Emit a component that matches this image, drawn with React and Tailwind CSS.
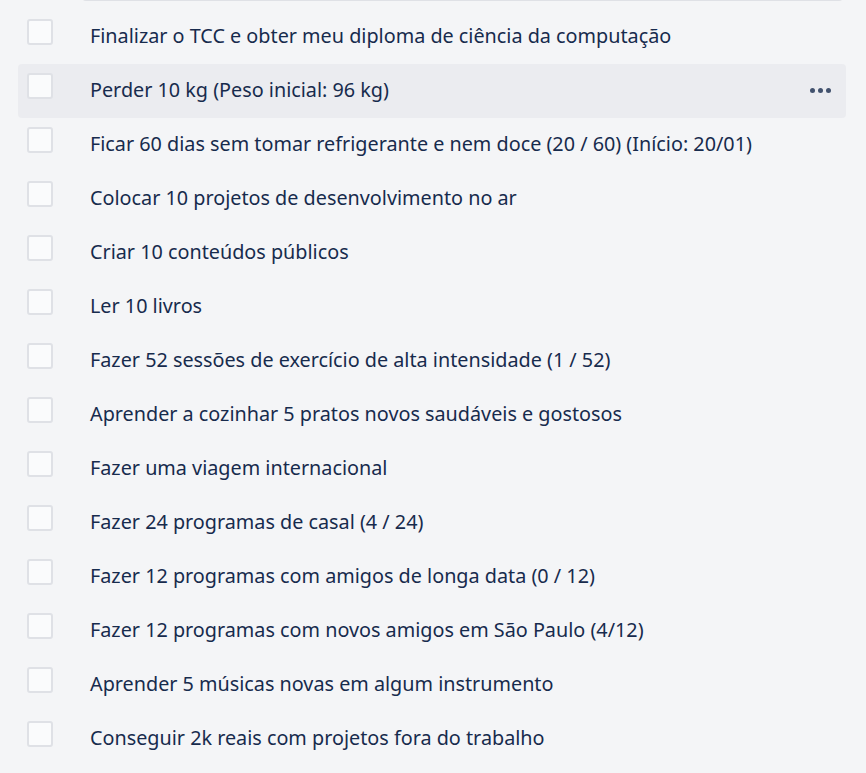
const ITEMS = [
  "Finalizar o TCC e obter meu diploma de ciência da computação",
  "Perder 10 kg (Peso inicial: 96 kg)",
  "Ficar 60 dias sem tomar refrigerante e nem doce (20 / 60) (Início: 20/01)",
  "Colocar 10 projetos de desenvolvimento no ar",
  "Criar 10 conteúdos públicos",
  "Ler 10 livros",
  "Fazer 52 sessões de exercício de alta intensidade (1 / 52)",
  "Aprender a cozinhar 5 pratos novos saudáveis e gostosos",
  "Fazer uma viagem internacional",
  "Fazer 24 programas de casal (4 / 24)",
  "Fazer 12 programas com amigos de longa data (0 / 12)",
  "Fazer 12 programas com novos amigos em São Paulo (4/12)",
  "Aprender 5 músicas novas em algum instrumento",
  "Conseguir 2k reais com projetos fora do trabalho",
];

function ChecklistItem({ text, active }) {
  return (
    <div
      className={
        "flex h-[54px] items-start rounded-[4px] pl-[9px] pr-[15px] " +
        (active ? "bg-[#ebecf0]" : "")
      }
    >
      <div className="mt-[9px] h-[26px] w-[26px] shrink-0 rounded-[3px] border-2 border-[#dfe1e6] bg-[#fafbfc]" />
      <div className="ml-[37px] flex h-full flex-1 items-center pb-[3px] text-[19.8px] text-[#172b4d]">
        {text}
      </div>
      {active ? (
        <div className="flex h-full items-center gap-[3px] pb-[1px]">
          <span className="h-[5px] w-[5px] rounded-full bg-[#42526e]" />
          <span className="h-[5px] w-[5px] rounded-full bg-[#42526e]" />
          <span className="h-[5px] w-[5px] rounded-full bg-[#42526e]" />
        </div>
      ) : null}
    </div>
  );
}

export default function App() {
  return (
    <div
      className="h-[773px] w-[866px] overflow-hidden bg-[#f4f5f7]"
      style={{ fontFamily: '"Noto Sans", "Open Sans", sans-serif' }}
    >
      <div className="-mt-[10px] flex h-[12px] items-end pl-[32px] pr-[23px]">
        <span className="w-[50px] text-[13px] leading-[13px] text-[#5e6c84]">0%</span>
        <div className="mb-[1px] h-[10px] flex-1 rounded-[4px] bg-[#dfe1e6]" />
      </div>
      <div className="ml-[18px] mr-[20px] mt-[8px] flex flex-col">
        {ITEMS.map((text, i) => (
          <ChecklistItem key={text} text={text} active={i === 1} />
        ))}
      </div>
    </div>
  );
}
